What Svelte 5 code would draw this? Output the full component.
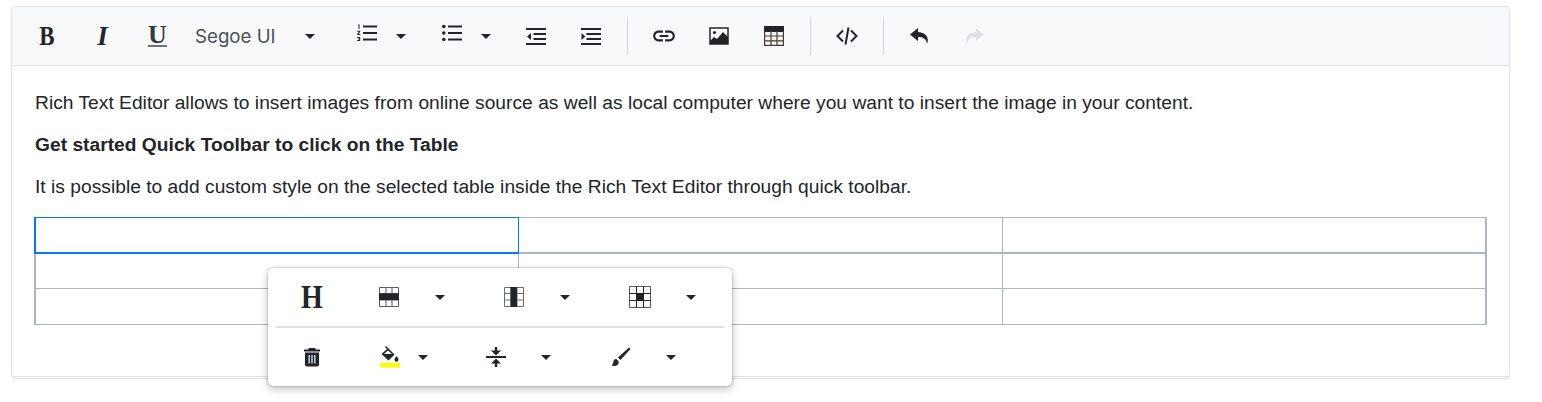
<script>
	const rows = [0, 1, 2];
	const cols = [0, 1, 2];
</script>

{#snippet caret()}
	<span class="caret"></span>
{/snippet}

<div class="page">
	<div class="editor">
		<div class="toolbar">
			<button class="tool"><span class="glyph bold">B</span></button>
			<button class="tool"><span class="glyph italic">I</span></button>
			<button class="tool"><span class="glyph under">U</span></button>
			<button class="font-select"><span>Segoe UI</span>{@render caret()}</button>
			<button class="list-btn">
				<svg width="22" height="22" viewBox="0 0 22 22"><path d="M2 2.500h1.500v4.500h-1V3.500H2zM1.200 8.800h3v1.100L2.600 12h1.700v.9H1.200V12l1.800-2.200H1.200zM1.200 15h3v4h-3v-.9h2v-.7h-1v-.8h1v-.7h-2z"/><path d="M7 3.500h14v2H7zM7 10h14v2H7zM7 16.500h14v2H7z"/></svg>
				{@render caret()}
			</button>
			<button class="list-btn">
				<svg width="22" height="22" viewBox="0 0 22 22"><circle cx="2.800" cy="4.500" r="1.800"/><circle cx="2.800" cy="11" r="1.800"/><circle cx="2.800" cy="17.500" r="1.800"/><path d="M7 3.500h14v2H7zM7 10h14v2H7zM7 16.500h14v2H7z"/></svg>
				{@render caret()}
			</button>
			<button class="tool left">
				<svg width="20" height="20" viewBox="0 0 20 20"><path d="M0 2h20v2H0zM7.500 7h12.500v2H7.500zM7.500 12h12.500v2H7.500zM0 17h20v2H0zM5 7v7L1 10.500z"/></svg>
			</button>
			<button class="tool left">
				<svg width="20" height="20" viewBox="0 0 20 20"><path d="M0 2h20v2H0zM5.500 7H20v2H5.500zM5.500 12H20v2H5.500zM0 17h20v2H0zM.5 7v7l3.800-3.500z"/></svg>
			</button>
			<span class="sep"></span>
			<button class="tool">
				<svg width="26" height="26" viewBox="0 0 24 24"><path d="M3.900 12c0-1.710 1.390-3.100 3.100-3.100h4V7H7c-2.760 0-5 2.240-5 5s2.240 5 5 5h4v-1.900H7c-1.710 0-3.100-1.390-3.100-3.100zM8 13h8v-2H8v2zm9-6h-4v1.900h4c1.710 0 3.100 1.390 3.100 3.100s-1.390 3.100-3.100 3.100h-4V17h4c2.760 0 5-2.240 5-5s-2.240-5-5-5z"/></svg>
			</button>
			<button class="tool">
				<svg width="20" height="18" viewBox="0 0 20 18"><path d="M1 1h18v16H1z" fill="#fff" stroke="#212529" stroke-width="1.500"/><path d="M1 17v-3l4-4 3 2 6-7 5 5v7z"/><circle cx="5.500" cy="5.500" r="1.600"/></svg>
			</button>
			<button class="tool">
				<svg width="20" height="20" viewBox="0 0 20 20"><path d="M0 0h20v6H0z"/><path d="M.6 5v14.400h18.800V5M.6 10h18.800M.6 14.800h18.800M7 5v14.400M13 5v14.400" fill="none" stroke="#4a3a2a" stroke-width="1.200"/></svg>
			</button>
			<span class="sep late"></span>
			<button class="tool">
				<svg width="22" height="20" viewBox="0 0 22 20"><path d="M7 4.500 1.500 10 7 15.500M15 4.500l5.500 5.500L15 15.500M12.500 1.500l-3 17" fill="none" stroke="#212529" stroke-width="2"/></svg>
			</button>
			<span class="sep late"></span>
			<button class="tool">
				<svg width="22" height="18" viewBox="0 0 22 18"><path d="M9 1 1 7.500 9 14v-4c5 0 8 1.500 9 7 2.500-6-.500-11.500-9-12z"/></svg>
			</button>
			<button class="tool left off">
				<svg width="22" height="18" viewBox="0 0 22 18"><path d="m13 1 8 6.500L13 14v-4c-5 0-8 1.500-9 7C1.500 11 4.500 5.500 13 5z"/></svg>
			</button>
		</div>

		<div class="content">
			<p>Rich Text Editor allows to insert images from online source as well as local computer where you want to insert the image in your content.</p>
			<p><strong>Get started Quick Toolbar to click on the Table</strong></p>
			<p>It is possible to add custom style on the selected table inside the Rich Text Editor through quick toolbar.</p>
			<table>
				<tbody>
					{#each rows as r}
						<tr class:first={r === 0}>
							{#each cols as c}
								<td class:selected={r === 0 && c === 0}></td>
							{/each}
						</tr>
					{/each}
				</tbody>
			</table>
		</div>
	</div>

	<div class="quick">
		<div class="quick-row">
			<button class="heading"><span class="glyph">H</span></button>
			<button class="split">
				<svg width="20" height="20" viewBox="0 0 20 20"><path d="M.5.500h19v19H.500zM7 .5v19M13 .5v19M.5 6.500h19M.5 13h19" fill="#fff" stroke="#55596a"/><path d="M0 6.500h20V13H0z"/></svg>
				{@render caret()}
			</button>
			<button class="split">
				<svg width="20" height="20" viewBox="0 0 20 20"><path d="M.5.500h19v19H.500zM7 .5v19M13 .5v19M.5 6.500h19M.5 13h19" fill="#fff" stroke="#6a6e70"/><path d="M6.500 0H13v20H6.500z"/></svg>
				{@render caret()}
			</button>
			<button class="split">
				<svg class="cell" width="22" height="22" viewBox="0 0 22 22"><path d="M.5.500h21v21H.500z" fill="#fff" stroke="#55596a"/><path d="M7.500 .5v21M14.500 .5v21M.5 7.500h21M.5 14.500h21" fill="none" stroke="#212529"/><path d="M7.500 7.500h7v7h-7z"/></svg>
				{@render caret()}
			</button>
		</div>
		<div class="quick-line"></div>
		<div class="quick-row">
			<button class="heading">
				<svg width="18" height="20" viewBox="0 0 18 20"><path d="M6 1h6l1 1.500h4v2H1v-2h4z"/><path d="M2 5.500h14v12a2 2 0 0 1-2 2H4a2 2 0 0 1-2-2z"/><path d="M5.500 8h1.400v8.500H5.500zM8.300 8h1.400v8.500H8.300zM11.100 8h1.400v8.500h-1.400z" fill="#cfe0ee"/></svg>
			</button>
			<button class="split fill">
				<svg width="20" height="24" viewBox="0 0 20 24"><path d="m6 1 1 1 7.500 7.500L8.500 15.500 1.500 9 7 4 5 2zM8 5.500 4 9h8z"/><path d="M16.500 11s2 2.500 2 3.700a2 2 0 0 1-4 0c0-1.200 2-3.700 2-3.700z"/><rect x="0" y="18" width="20" height="4.500" fill="#ffff00"/></svg>
				{@render caret()}
			</button>
			<button class="split compress">
				<svg width="20" height="20" viewBox="0 0 20 20"><path d="M0 9h20v2H0zM8.800 0h2.400v3.500H15l-5 5-5-5h3.800zM10 11.500l5 5h-3.800V20H8.800v-3.500H5z"/></svg>
				{@render caret()}
			</button>
			<button class="split brush">
				<svg width="20" height="20" viewBox="0 0 20 20"><path d="M18 0.500 19.500 2 9.500 13 7 10.500zM5 12c-2 0-2.500 1.500-2.700 3-.2 1.500-.8 2.500-1.800 3.300 2 1 4.500.7 6-.3 1.800-1.300 1.500-4-.2-5.200-.5-.5-.8-.8-1.300-.8z"/></svg>
				{@render caret()}
			</button>
		</div>
	</div>
</div>

<style>
	:global(body) {
		background: #fff;
	}

	.page {
		position: relative;
		padding: 6px 32px 23px 11px;
		font-family: "Liberation Sans", Arial, sans-serif;
		color: #212529;
	}

	button {
		border: 0;
		background: none;
		padding: 0;
		margin: 0;
		font: inherit;
		color: inherit;
		display: flex;
		align-items: center;
	}

	svg {
		display: block;
		fill: #212529;
	}

	.editor {
		height: 373px;
		box-sizing: border-box;
		border: 1px solid #dee2e6;
		border-radius: 4px;
		padding-bottom: 1px;
		display: flex;
		flex-direction: column;
	}

	.toolbar {
		height: 59px;
		flex: none;
		box-sizing: border-box;
		display: flex;
		align-items: center;
		padding-left: 8px;
		background: #f8f9fa;
		border-bottom: 1px solid #dee2e6;
		border-radius: 4px 4px 0 0;
	}

	.tool {
		width: 55px;
		height: 40px;
		justify-content: center;
	}

	.tool svg {
		margin-left: 1px;
	}

	.tool.left svg {
		margin-left: 0;
		margin-right: 1px;
	}

	.tool.off svg {
		fill: #dee2e6;
	}

	.glyph {
		font-family: "Liberation Serif", serif;
		line-height: 1;
	}

	.bold {
		font-size: 27px;
		font-weight: 700;
		transform: scaleX(0.85);
	}

	.italic {
		font-size: 27px;
		font-style: italic;
		font-weight: 700;
	}

	.under {
		font-size: 26px;
		font-weight: 700;
		border-bottom: 2px solid #6c757d;
		line-height: 20px;
		color: #343a40;
	}

	.font-select {
		width: 154px;
		height: 40px;
		padding: 0 24px 0 10px;
		box-sizing: border-box;
		justify-content: space-between;
		font-family: Inter, sans-serif;
		font-size: 18.7px;
		color: #495057;
	}

	.list-btn {
		width: 85px;
		height: 40px;
		padding-left: 17px;
		box-sizing: border-box;
	}

	.list-btn svg {
		margin-bottom: 6px;
	}

	.list-btn .caret {
		margin-left: 18px;
	}

	.caret {
		flex: none;
		width: 0;
		height: 0;
		border-left: 5px solid transparent;
		border-right: 5px solid transparent;
		border-top: 5px solid #212529;
	}

	.sep {
		flex: none;
		width: 1px;
		height: 37px;
		margin: 0 8px;
		background: #ced4da;
	}

	.sep.late {
		margin-left: 9px;
	}

	.content {
		flex: 1;
		padding: 23px 22px 0 23px;
		border-bottom: 1px solid #dee2e6;
		font-size: 19.2px;
		line-height: 27px;
		letter-spacing: 0.02px;
	}

	p {
		margin: 0 0 15px;
	}

	strong {
		font-weight: 700;
	}

	table {
		width: calc(100% + 1px);
		table-layout: fixed;
		border-collapse: collapse;
		margin: 17px 0 0 -1px;
	}

	td {
		height: 34.67px;
		padding: 0;
		border: 1px solid #adb5bd;
	}

	td:first-child {
		border-left-width: 2px;
	}

	td:last-child {
		border-right-width: 2px;
	}

	tr.first td {
		height: 33.67px;
		border-bottom-width: 2px;
	}

	td.selected {
		border: 1px solid #007bff;
		border-bottom-width: 2px;
		border-left-width: 2px;
	}

	.quick {
		position: absolute;
		left: 268px;
		top: 268px;
		width: 464px;
		height: 118px;
		box-sizing: border-box;
		padding: 0 8px;
		background: #fff;
		border-radius: 5px;
		box-shadow: 0 0 1px 1px rgba(0, 0, 0, 0.12), 0 3px 8px rgba(0, 0, 0, 0.25);
	}

	.quick-row {
		height: 58px;
		display: flex;
		align-items: center;
	}

	.quick-line {
		height: 2px;
		background: #dee2e6;
	}

	.heading {
		width: 72px;
		height: 40px;
		justify-content: center;
	}

	.heading .glyph {
		font-size: 33px;
		font-weight: 700;
		transform: scaleX(0.85);
	}

	.split {
		width: 125px;
		height: 40px;
		padding-left: 31px;
		box-sizing: border-box;
	}

	.split .caret {
		margin-left: 36px;
	}

	.split .cell + .caret {
		margin-left: 35px;
	}

	.fill {
		width: 106px;
		padding-left: 32px;
	}

	.fill .caret {
		margin-left: 18px;
	}

	.compress {
		padding-left: 32px;
	}

	.compress .caret {
		margin-left: 35px;
	}

	.brush {
		padding-left: 32px;
	}

	.brush .caret {
		margin-left: 35px;
	}
</style>
